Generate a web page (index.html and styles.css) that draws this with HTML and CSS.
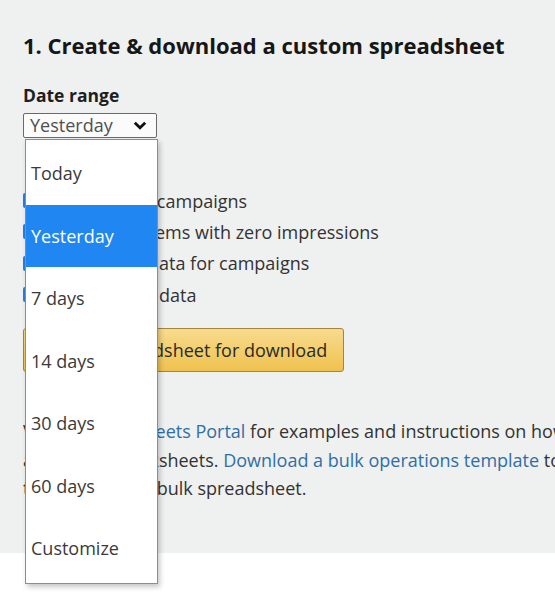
FILE: index.html
```html
<!DOCTYPE html>
<html lang="en">
<head>
<meta charset="utf-8">
<title>Bulk operations</title>
<link rel="stylesheet" href="styles.css">
</head>
<body>
<main class="panel">
  <h2 class="title">1. Create &amp; download a custom spreadsheet</h2>
  <div class="field-label">Date range</div>
  <div class="select-wrap">
    <div class="select">
      <span class="select-value">Yesterday</span>
      <svg class="chevron" width="14" height="9" viewBox="0 0 14 9"><polyline points="1.8,1.8 7,6.8 12.2,1.8" fill="none" stroke="#111" stroke-width="2.8" stroke-linejoin="miter"/></svg>
    </div>
    <ul class="dropdown">
      <li class="option">Today</li>
      <li class="option selected">Yesterday</li>
      <li class="option">7 days</li>
      <li class="option">14 days</li>
      <li class="option">30 days</li>
      <li class="option">60 days</li>
      <li class="option">Customize</li>
    </ul>
  </div>

  <div class="checks">
    <label class="check-row"><span class="box"></span><span>Terminated campaigns</span></label>
    <label class="check-row"><span class="box"></span><span>Campaign items with zero impressions</span></label>
    <label class="check-row"><span class="box"></span><span>Placement data for campaigns</span></label>
    <label class="check-row"><span class="box"></span><span>Brand asset data</span></label>
  </div>

  <button class="btn">Request spreadsheet for download</button>

  <div class="info">
    <div class="line">View the <a href="#">Bulksheets Portal</a> for examples and instructions on how to use</div>
    <div class="line">and upload bulksheets. <a href="#">Download a bulk operations template</a> to get started</div>
    <div class="line">to create a new bulk spreadsheet.</div>
  </div>
</main>
</body>
</html>
```
FILE: styles.css
```css
html {
  background: #ffffff;
}
body {
  margin: 0;
  padding: 0;
  min-height: 593px;
  font-family: "Open Sans", "Noto Sans", sans-serif;
  color: #333;
}
.panel {
  background: #eff0f0;
  padding: 31px 0 50px 23px;
  white-space: nowrap;
}
.title {
  margin: 0;
  font-size: 22px;
  line-height: 28px;
  font-weight: 700;
  color: #161616;
}
.field-label {
  margin-top: 25px;
  font-size: 17.5px;
  line-height: 22px;
  font-weight: 700;
  color: #1e1e1e;
}
.select-wrap {
  position: relative;
  margin-top: 7px;
  width: 135px;
}
.select {
  box-sizing: border-box;
  height: 25px;
  width: 134px;
  border: 1px solid #6a6a6a;
  border-radius: 2px;
  background: #fbfbfb;
  display: flex;
  align-items: center;
  justify-content: space-between;
  padding: 0 9px 0 6px;
}
.select-value {
  font-size: 18px;
  line-height: 23px;
  color: #505050;
}
.chevron { display: block; }
.dropdown {
  position: absolute;
  top: 26px;
  left: 2px;
  z-index: 5;
  box-sizing: border-box;
  width: 133px;
  margin: 0;
  padding: 2px 0 3px;
  list-style: none;
  background: #fff;
  border: 1px solid #8d8d8d;
  box-shadow: 2px 3px 5px rgba(0,0,0,0.22);
}
.option {
  height: 62.5px;
  display: flex;
  align-items: center;
  padding-left: 5px;
  font-size: 18px;
  color: #3a3a3a;
}
.option.selected {
  background: #1f86f2;
  color: #fff;
}
.checks {
  margin-top: 47px;
  display: flex;
  flex-direction: column;
}
.check-row {
  height: 31.3px;
  display: flex;
  align-items: center;
  gap: 16px;
  font-size: 18px;
  color: #333;
}
.box {
  width: 16px;
  height: 15px;
  border-radius: 2px;
  background: #2a7fd8;
  flex: none;
}
.btn {
  display: block;
  margin-top: 18px;
  height: 44px;
  box-sizing: border-box;
  padding: 0 16px 0 9px;
  border: 1px solid #a4863a;
  border-radius: 3px;
  background: linear-gradient(#f8db8e, #efc24e);
  font-family: inherit;
  font-size: 18px;
  color: #2a2a2a;
}
.info {
  margin-top: 45px;
  margin-right: 0;
  overflow: hidden;
  font-size: 18px;
  line-height: 28.5px;
  color: #333;
}
.info a {
  color: #2e6fa6;
  text-decoration: none;
}
```
